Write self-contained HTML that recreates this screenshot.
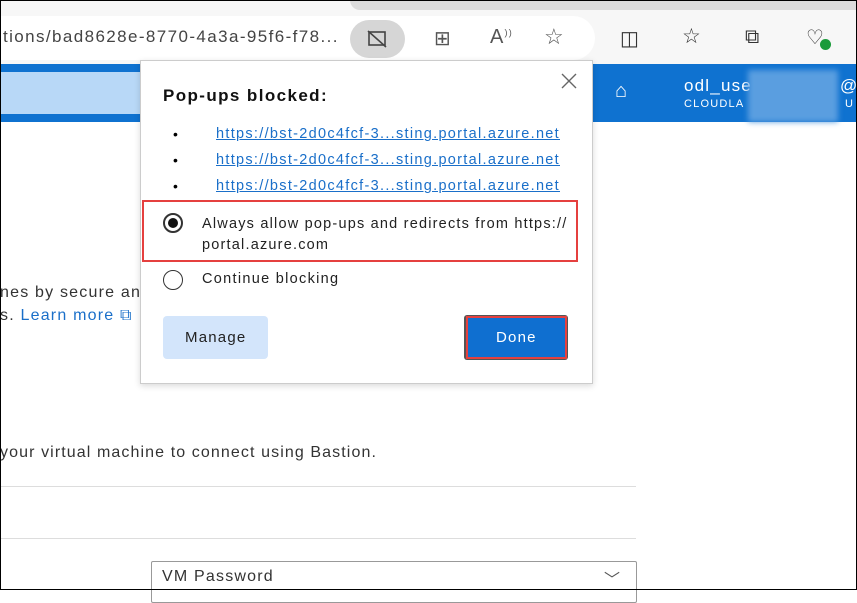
<!DOCTYPE html>
<html><head><style>
body{margin:0;width:857px;height:590px;overflow:hidden;font-family:"Liberation Sans",sans-serif;background:#fff;position:relative;letter-spacing:1.2px}
.a{position:absolute}
#frame{position:absolute;left:0;top:0;width:855px;height:588px;border:1px solid #000;z-index:50;pointer-events:none}
.link{color:#1a6fc9;text-decoration:underline;font-size:14.5px;letter-spacing:1.3px}
</style></head><body>
<div id="frame"></div>
<div class="a" style="left:0;top:0;width:857px;height:64px;background:#f7f7f7"></div>
<div class="a" style="left:350px;top:0;width:507px;height:10px;background:#dcdcdc;border-radius:0 0 0 10px"></div>
<div class="a" style="left:0;top:16px;width:595px;height:44px;background:#fff;border-radius:0 22px 22px 0"></div>
<div class="a" style="left:3px;top:27px;font-size:17px;color:#444;letter-spacing:1.4px">tions/bad8628e-8770-4a3a-95f6-f78...</div>
<div class="a" style="left:350px;top:20px;width:55px;height:38px;background:#d6d6d6;border-radius:19px"></div>
<svg class="a" style="left:366px;top:29px" width="22" height="20"><rect x="3" y="3" width="16" height="13" fill="none" stroke="#444" stroke-width="1.6"/><line x1="2" y1="2" x2="20" y2="18" stroke="#444" stroke-width="1.6"/></svg>
<div class="a" style="left:434px;top:26px;font-size:20px;color:#555">⊞</div>
<div class="a" style="left:490px;top:26px;font-size:20px;color:#555">A<sup style="font-size:9px">))</sup></div>
<div class="a" style="left:544px;top:24px;font-size:22px;color:#555">☆</div>
<div class="a" style="left:620px;top:26px;font-size:20px;color:#333">◫</div>
<div class="a" style="left:682px;top:24px;font-size:21px;color:#333">☆</div>
<div class="a" style="left:745px;top:26px;font-size:20px;color:#333">⧉</div>
<div class="a" style="left:806px;top:25px;font-size:20px;color:#333">♡</div>
<div class="a" style="left:820px;top:39px;width:11px;height:11px;border-radius:50%;background:#1a9b3a"></div>
<div class="a" style="left:0;top:64px;width:857px;height:58px;background:#0f72d0"></div>
<div class="a" style="left:0;top:72px;width:145px;height:42px;background:#b8d8f7"></div>
<div class="a" style="left:615px;top:80px;font-size:20px;color:#fff">⌂</div>
<div class="a" style="left:684px;top:76px;font-size:17px;color:#fff">odl_use</div>
<div class="a" style="left:684px;top:98px;font-size:11px;color:#fff">CLOUDLA</div>
<div class="a" style="left:748px;top:70px;width:90px;height:52px;background:#5a9ee0;filter:blur(3px)"></div>
<div class="a" style="left:840px;top:76px;font-size:17px;color:#fff">@</div>
<div class="a" style="left:845px;top:98px;font-size:11px;color:#fff">U</div>
<div class="a" style="left:0;top:284px;font-size:16px;color:#333">nes by secure an</div>
<div class="a" style="left:0;top:307px;font-size:16px;color:#333">s. <span style="color:#1a6fc9">Learn more ⧉</span></div>
<div class="a" style="left:0;top:444px;font-size:16px;color:#333;letter-spacing:1.1px">your virtual machine to connect using Bastion.</div>
<div class="a" style="left:0;top:486px;width:636px;height:1px;background:#ddd"></div>
<div class="a" style="left:0;top:538px;width:636px;height:1px;background:#ddd"></div>
<div class="a" style="left:151px;top:561px;width:484px;height:40px;border:1px solid #999;border-radius:2px"></div>
<div class="a" style="left:162px;top:568px;font-size:16px;color:#333">VM Password</div>
<div class="a" style="left:604px;top:566px;font-size:16px;color:#555">﹀</div>
<div class="a" style="left:140px;top:60px;width:451px;height:322px;background:#fff;border:1px solid #ccc;box-shadow:0 2px 6px rgba(0,0,0,.15)"></div>
<svg class="a" style="left:561px;top:73px" width="16" height="16"><path d="M1 1L15 15M15 1L1 15" stroke="#666" stroke-width="1.4"/></svg>
<div class="a" style="left:163px;top:86px;font-size:17px;font-weight:bold;color:#111;letter-spacing:1.4px">Pop-ups blocked:</div>
<div class="a" style="left:173px;top:126px;font-size:14px">•</div>
<div class="a" style="left:173px;top:152px;font-size:14px">•</div>
<div class="a" style="left:173px;top:178px;font-size:14px">•</div>
<div class="a link" style="left:216px;top:126px">https://bst-2d0c4fcf-3...sting.portal.azure.net</div>
<div class="a link" style="left:216px;top:152px">https://bst-2d0c4fcf-3...sting.portal.azure.net</div>
<div class="a link" style="left:216px;top:178px">https://bst-2d0c4fcf-3...sting.portal.azure.net</div>
<div class="a" style="left:142px;top:200px;width:436px;height:62px;border:2px solid #e5403f;box-sizing:border-box"></div>
<div class="a" style="left:163px;top:213px;width:16px;height:16px;border:2px solid #333;border-radius:50%"></div>
<div class="a" style="left:168px;top:218px;width:10px;height:10px;background:#111;border-radius:50%"></div>
<div class="a" style="left:202px;top:214px;font-size:14.5px;color:#222;line-height:21px">Always allow pop-ups and redirects from https://<br>portal.azure.com</div>
<div class="a" style="left:163px;top:270px;width:18px;height:18px;border:1.5px solid #333;border-radius:50%"></div>
<div class="a" style="left:202px;top:271px;font-size:14.5px;color:#222;letter-spacing:1.3px">Continue blocking</div>
<div class="a" style="left:163px;top:316px;width:105px;height:43px;background:#d3e5fb;border-radius:4px"></div>
<div class="a" style="left:185px;top:329px;font-size:15px;color:#222">Manage</div>
<div class="a" style="left:464px;top:315px;width:104px;height:45px;background:#555;border-radius:3px"></div>
<div class="a" style="left:466px;top:316px;width:101px;height:43px;background:#0f6fd0;border:2px solid #e5403f;box-sizing:border-box"></div>
<div class="a" style="left:496px;top:329px;font-size:15px;color:#fff">Done</div>
</body></html>
